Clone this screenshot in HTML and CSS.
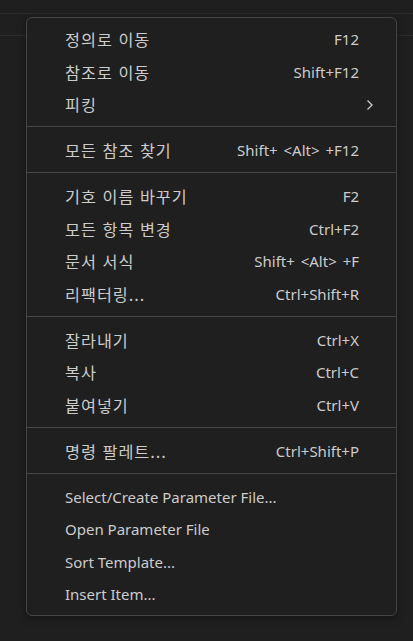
FILE: index.html
```html
<!DOCTYPE html>
<html lang="ko">
<head>
<meta charset="utf-8">
<title>Context menu</title>
<link rel="stylesheet" href="styles.css">
</head>
<body>
<div class="workbench">
  <div class="titlebar"></div>
  <div class="tabs"></div>
  <div class="editor"></div>

  <div class="menu" role="menu">
    <div class="item"><span class="label ko">정의로 이동</span><span class="key">F12</span></div>
    <div class="item"><span class="label ko">참조로 이동</span><span class="key">Shift+F12</span></div>
    <div class="item has-sub"><span class="label ko">피킹</span><svg class="chev" width="8" height="12" viewBox="0 0 8 12"><path d="M1.5 1.5 L6 6 L1.5 10.5" fill="none" stroke="#cccccc" stroke-width="1.3"/></svg></div>
    <div class="sep"></div>
    <div class="item"><span class="label ko">모든 참조 찾기</span><span class="key">Shift+ &lt;Alt&gt; +F12</span></div>
    <div class="sep"></div>
    <div class="item"><span class="label ko">기호 이름 바꾸기</span><span class="key">F2</span></div>
    <div class="item"><span class="label ko">모든 항목 변경</span><span class="key">Ctrl+F2</span></div>
    <div class="item"><span class="label ko">문서 서식</span><span class="key">Shift+ &lt;Alt&gt; +F</span></div>
    <div class="item"><span class="label ko">리팩터링...</span><span class="key">Ctrl+Shift+R</span></div>
    <div class="sep"></div>
    <div class="item"><span class="label ko">잘라내기</span><span class="key">Ctrl+X</span></div>
    <div class="item"><span class="label ko">복사</span><span class="key">Ctrl+C</span></div>
    <div class="item"><span class="label ko">붙여넣기</span><span class="key">Ctrl+V</span></div>
    <div class="sep"></div>
    <div class="item"><span class="label ko">명령 팔레트...</span><span class="key">Ctrl+Shift+P</span></div>
    <div class="sep"></div>
    <div class="item"><span class="label">Select/Create Parameter File...</span></div>
    <div class="item"><span class="label">Open Parameter File</span></div>
    <div class="item"><span class="label">Sort Template...</span></div>
    <div class="item"><span class="label">Insert Item...</span></div>
  </div>
</div>
</body>
</html>
```

FILE: styles.css
```css
html, body {
  margin: 0;
  padding: 0;
  background: #1f1f1f;
  height: 100%;
  overflow: hidden;
}

.workbench {
  position: relative;
  height: 641px;
  background: #1f1f1f;
  font-family: "Noto Sans", "Noto Sans CJK KR", sans-serif;
}

.titlebar {
  height: 13px;
  background: #1f1f1f;
  border-bottom: 1px solid #2b2b2b;
}

.tabs {
  height: 21px;
  background: #1f1f1f;
  border-bottom: 1px solid #2b2b2b;
}

.menu {
  position: absolute;
  left: 26px;
  top: 17px;
  width: 369px;
  padding: 5px 0 4.5px;
  background: #1f1f1f;
  border: 1px solid #454545;
  border-radius: 6px;
  box-shadow: 0 2px 8px rgba(0, 0, 0, 0.36);
  color: #cccccc;
  font-size: 15px;
}

.item {
  position: relative;
  display: flex;
  align-items: center;
  justify-content: space-between;
  height: 32.5px;
  padding: 0 37px 0 38px;
  white-space: nowrap;
}

.label {
  flex: 1;
}

.label.ko {
  font-family: "Noto Sans CJK KR", "Noto Sans", sans-serif;
  font-size: 16.25px;
  letter-spacing: 1px;
}

.key {
  margin-left: 20px;
  word-spacing: 2px;
}

.chev {
  position: absolute;
  right: 22px;
  top: 10.5px;
}

.sep {
  height: 13.5px;
  position: relative;
}

.sep::after {
  content: "";
  position: absolute;
  left: 0;
  right: 0;
  top: 5.5px;
  border-top: 1px solid #454545;
}
```
